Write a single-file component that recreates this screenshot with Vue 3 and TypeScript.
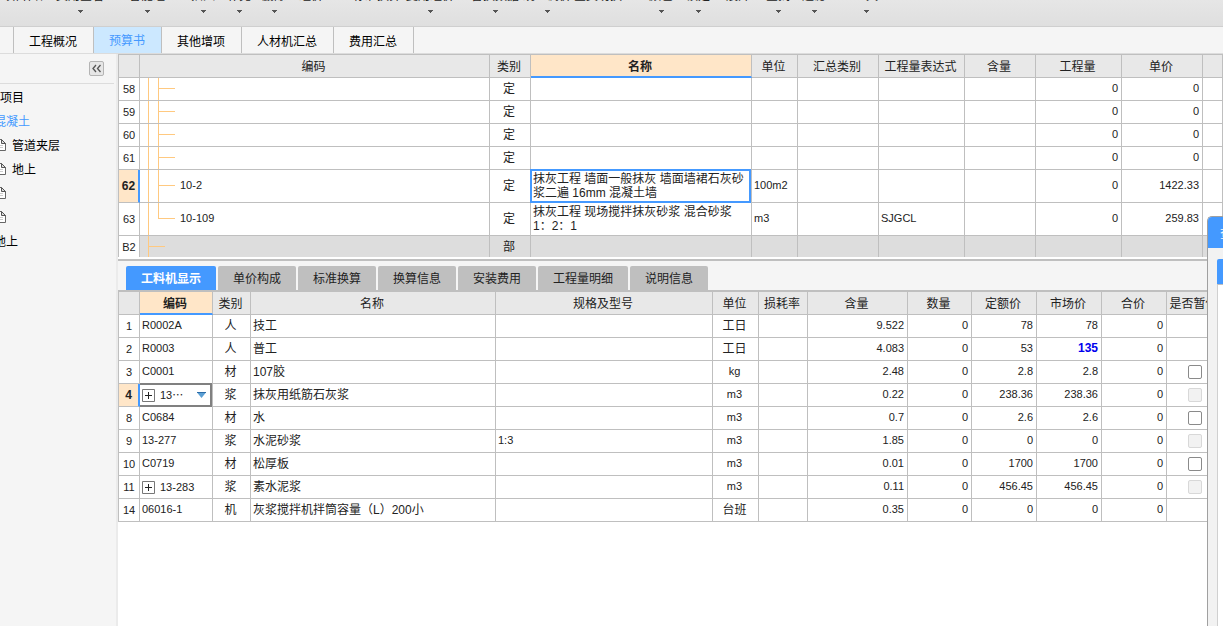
<script setup lang="ts">
import { ref } from 'vue'

interface ToolItem { label: string; width: number; menu: boolean; gap: number }
const tools: ToolItem[] = [
  { label: '项目自检', width: 54, menu: false, gap: 0 },
  { label: '费用查看', width: 52, menu: true, gap: 0 },
  { label: '智能组', width: 50, menu: true, gap: 16 },
  { label: '插入', width: 34, menu: true, gap: 14 },
  { label: '补充', width: 34, menu: true, gap: 2 },
  { label: '删除', width: 34, menu: true, gap: 1 },
  { label: '组价', width: 34, menu: false, gap: 3 },
  { label: '标准换算', width: 50, menu: false, gap: 24 },
  { label: '复用组价', width: 56, menu: true, gap: 0 },
  { label: '替换数据', width: 50, menu: true, gap: 12 },
  { label: '统一调价', width: 50, menu: true, gap: 2 },
  { label: '全费切换', width: 52, menu: false, gap: 0 },
  { label: '颜色', width: 34, menu: true, gap: 20 },
  { label: '锁定', width: 34, menu: true, gap: 3 },
  { label: '展开', width: 46, menu: false, gap: 0 },
  { label: '查找', width: 34, menu: true, gap: 0 },
  { label: '过滤', width: 34, menu: true, gap: 2 },
  { label: '工具', width: 34, menu: true, gap: 18 },
]

const pages = ['工程概况', '预算书', '其他增项', '人材机汇总', '费用汇总']
const page = ref('预算书')

interface TreeNode { label: string; kind: 'root' | 'active' | 'file' | 'leaf' }
const tree: TreeNode[] = [
  { label: '项目', kind: 'root' },
  { label: '混凝土', kind: 'active' },
  { label: '管道夹层', kind: 'file' },
  { label: '地上', kind: 'file' },
  { label: '', kind: 'file' },
  { label: '', kind: 'file' },
  { label: '地上', kind: 'leaf' },
]

interface Item {
  no: string; code: string; type: string; name: string; unit: string
  expr: string; qty: string; price: string; branch: 'through' | 'last' | 'section'
}
const blank = (no: string): Item => ({
  no, code: '', type: '定', name: '', unit: '', expr: '', qty: '0', price: '0', branch: 'through',
})
const items: Item[] = [
  blank('58'), blank('59'), blank('60'), blank('61'),
  { no: '62', code: '10-2', type: '定', name: '抹灰工程 墙面一般抹灰 墙面墙裙石灰砂浆二遍 16mm 混凝土墙', unit: '100m2', expr: '', qty: '0', price: '1422.33', branch: 'through' },
  { no: '63', code: '10-109', type: '定', name: '抹灰工程 现场搅拌抹灰砂浆 混合砂浆\n1：2：1', unit: 'm3', expr: 'SJGCL', qty: '0', price: '259.83', branch: 'last' },
  { no: 'B2', code: '', type: '部', name: '', unit: '', expr: '', qty: '', price: '', branch: 'section' },
]
const selected = '62'

const detailTabs = ['工料机显示', '单价构成', '标准换算', '换算信息', '安装费用', '工程量明细', '说明信息']
const detailTab = ref('工料机显示')

interface Resource {
  no: string; code: string; type: string; name: string; spec: string; unit: string
  amount: string; base: string; market: string; check: 'on' | 'off' | ''; group?: boolean; changed?: boolean
}
const resources: Resource[] = [
  { no: '1', code: 'R0002A', type: '人', name: '技工', spec: '', unit: '工日', amount: '9.522', base: '78', market: '78', check: '' },
  { no: '2', code: 'R0003', type: '人', name: '普工', spec: '', unit: '工日', amount: '4.083', base: '53', market: '135', check: '', changed: true },
  { no: '3', code: 'C0001', type: '材', name: '107胶', spec: '', unit: 'kg', amount: '2.48', base: '2.8', market: '2.8', check: 'on' },
  { no: '4', code: '13⋯', type: '浆', name: '抹灰用纸筋石灰浆', spec: '', unit: 'm3', amount: '0.22', base: '238.36', market: '238.36', check: 'off', group: true },
  { no: '8', code: 'C0684', type: '材', name: '水', spec: '', unit: 'm3', amount: '0.7', base: '2.6', market: '2.6', check: 'on' },
  { no: '9', code: '13-277', type: '浆', name: '水泥砂浆', spec: '1:3', unit: 'm3', amount: '1.85', base: '0', market: '0', check: 'off' },
  { no: '10', code: 'C0719', type: '材', name: '松厚板', spec: '', unit: 'm3', amount: '0.01', base: '1700', market: '1700', check: 'on' },
  { no: '11', code: '13-283', type: '浆', name: '素水泥浆', spec: '', unit: 'm3', amount: '0.11', base: '456.45', market: '456.45', check: 'off', group: true },
  { no: '14', code: '06016-1', type: '机', name: '灰浆搅拌机拌筒容量（L）200小', spec: '', unit: '台班', amount: '0.35', base: '0', market: '0', check: '' },
]
const editing = '4'
</script>

<template>
  <div class="app">
    <header class="toolbar">
      <button
        v-for="t in tools"
        :key="t.label"
        class="tool"
        type="button"
        :style="{ width: t.width + 'px', marginLeft: t.gap + 'px' }"
      >
        <span class="tool-label">{{ t.label }}</span>
        <svg class="arrow" :class="{ none: !t.menu }" viewBox="0 0 5 3" aria-hidden="true">
          <path d="M0 0h5v1H4v1H3v1H2V2H1V1H0z" fill="#555" />
        </svg>
      </button>
    </header>

    <nav class="pages">
      <span class="pages-edge"></span>
      <button
        v-for="p in pages"
        :key="p"
        type="button"
        class="page"
        :class="{ active: p === page }"
        @click="page = p"
      >{{ p }}</button>
    </nav>

    <div class="body">
      <aside class="sidebar">
        <div class="side-head">
          <button class="collapse" type="button" aria-label="收起">
            <svg viewBox="0 0 13 13" aria-hidden="true">
              <path d="M6 3L3 6.500l3 3.500M10.500 3l-3 3.500l3 3.500" fill="none" stroke="#555" stroke-width="1.3" />
            </svg>
          </button>
        </div>
        <ul class="tree">
          <li v-for="(n, i) in tree" :key="i" :class="n.kind">
            <svg v-if="n.kind === 'file'" class="file" viewBox="0 0 12 12" aria-hidden="true">
              <path d="M1.500 .5h6l4 4v7h-10z" fill="#fff" stroke="#666" />
              <path d="M7.500 .5v4h4z" fill="#ddd" stroke="#555" />
              <path d="M3 6.500h6M3 8.500h6" stroke="#ccc" />
            </svg>
            <span class="node">{{ n.label }}</span>
          </li>
        </ul>
      </aside>

      <main class="work">
        <section class="upper">
          <table class="grid">
            <colgroup>
              <col class="w21"><col class="w350"><col class="w41"><col class="w221"><col class="w46"><col class="w81">
              <col class="w86"><col class="w71"><col class="w86"><col class="w81"><col>
            </colgroup>
            <thead>
              <tr>
                <th></th><th>编码</th><th>类别</th><th class="current">名称</th><th>单位</th><th>汇总类别</th>
                <th>工程量表达式</th><th>含量</th><th>工程量</th><th>单价</th><th></th>
              </tr>
            </thead>
            <tbody>
              <tr
                v-for="r in items"
                :key="r.no"
                :class="{ tall: r.code !== '', band: r.branch === 'section' }"
              >
                <td class="no" :class="{ picked: r.no === selected }">{{ r.no }}</td>
                <td class="branch latin" :class="r.branch">{{ r.code }}</td>
                <td class="mid">{{ r.type }}</td>
                <td class="name" :class="{ focus: r.no === selected }">{{ r.name }}</td>
                <td class="latin">{{ r.unit }}</td>
                <td></td>
                <td class="latin">{{ r.expr }}</td>
                <td></td>
                <td class="num">{{ r.qty }}</td>
                <td class="num">{{ r.price }}</td>
                <td></td>
              </tr>
            </tbody>
          </table>
        </section>

        <section class="lower">
          <div class="tabs" role="tablist">
            <button
              v-for="t in detailTabs"
              :key="t"
              type="button"
              role="tab"
              class="tab"
              :aria-selected="t === detailTab"
              :class="{ active: t === detailTab }"
              @click="detailTab = t"
            >{{ t }}</button>
          </div>
          <table class="grid detail">
            <colgroup>
              <col class="w21"><col class="w73"><col class="w38"><col class="w245"><col class="w217"><col class="w46">
              <col class="w49"><col class="w100"><col class="w64"><col class="w65"><col class="w65"><col class="w65"><col>
            </colgroup>
            <thead>
              <tr>
                <th></th><th class="current">编码</th><th>类别</th><th>名称</th><th>规格及型号</th><th>单位</th>
                <th>损耗率</th><th>含量</th><th>数量</th><th>定额价</th><th>市场价</th><th>合价</th><th>是否暂估</th>
              </tr>
            </thead>
            <tbody>
              <tr v-for="r in resources" :key="r.no">
                <td class="no" :class="{ picked: r.no === editing }">{{ r.no }}</td>
                <td class="latin" :class="{ edit: r.no === editing, grouped: r.group }">
                  <div class="code">
                    <button v-if="r.group" class="plus" type="button" aria-label="展开">
                      <svg viewBox="0 0 13 13" aria-hidden="true">
                        <path d="M.5 .5h12v12H.5z" fill="#fff" stroke="#777" />
                        <path d="M3 6.500h7M6.500 3v7" stroke="#222" />
                      </svg>
                    </button>
                    <span>{{ r.code }}</span>
                    <button v-if="r.no === editing" class="drop" type="button" aria-label="选择编码">
                      <svg viewBox="0 0 9 6" aria-hidden="true">
                        <path d="M0 .5h9L4.500 6z" fill="#5a9fd4" />
                        <path d="M0 0h9v1H0z" fill="#2c6ca8" />
                      </svg>
                    </button>
                  </div>
                </td>
                <td class="mid">{{ r.type }}</td>
                <td>{{ r.name }}</td>
                <td class="latin">{{ r.spec }}</td>
                <td class="mid" :class="{ latin: r.unit < 'z' }">{{ r.unit }}</td>
                <td></td>
                <td class="num">{{ r.amount }}</td>
                <td class="num">0</td>
                <td class="num">{{ r.base }}</td>
                <td class="num" :class="{ changed: r.changed }">{{ r.market }}</td>
                <td class="num">0</td>
                <td class="check">
                  <input v-if="r.check" type="checkbox" :disabled="r.check === 'off'" :aria-label="'是否暂估 ' + r.name">
                </td>
              </tr>
            </tbody>
          </table>
        </section>
      </main>
    </div>

    <aside class="window">
      <div class="window-title">查询</div>
      <div class="window-body">
        <div class="window-tab"></div>
        <div class="window-page"></div>
      </div>
    </aside>
  </div>
</template>

<style>
body {
  margin: 0;
  overflow: hidden;
}
</style>

<style scoped>
.app {
  position: relative;
  display: flex;
  flex-direction: column;
  height: 100vh;
  overflow: hidden;
  background: #f5f5f5;
  color: #222;
  font: 12px/14px "Liberation Sans", "Noto Sans CJK SC", sans-serif;
}
.app *,
.app *::after {
  box-sizing: border-box;
}
button {
  margin: 0;
  padding: 0;
  border: 0;
  background: none;
  color: inherit;
  font: inherit;
  white-space: nowrap;
}
svg {
  display: block;
}

.toolbar {
  display: flex;
  flex: none;
  align-items: flex-end;
  height: 27px;
  padding-bottom: 13px;
  border-bottom: 1px solid #cfcfcf;
  background: linear-gradient(#e6e6e6, #dfdfdf);
  overflow: hidden;
}
.tool {
  display: flex;
  flex: none;
  flex-direction: column;
  align-items: center;
  gap: 7px;
}
.tool-label {
  line-height: 14px;
}
.arrow {
  width: 5px;
  height: 3px;
}
.arrow.none {
  visibility: hidden;
}

.pages {
  display: flex;
  flex: none;
  height: 27px;
  border-bottom: 1px solid #dcdcdc;
}
.pages-edge {
  width: 14px;
  border-right: 1px solid #bfbfbf;
}
.page {
  padding: 4px 16px 0 15px;
  border-right: 1px solid #bfbfbf;
  color: #000;
}
.page.active {
  padding-top: 2px;
  background: #cce8ff;
  color: #4499ff;
}

.body {
  display: flex;
  flex: 1;
  min-height: 0;
}
.sidebar {
  flex: none;
  width: 118px;
  border-right: 2px solid #ebebeb;
  overflow: hidden;
}
.side-head {
  display: flex;
  justify-content: flex-end;
  align-items: center;
  height: 30px;
  margin-right: 2px;
  padding-right: 10px;
  border-bottom: 1px solid #dcdcdc;
}
.collapse {
  width: 15px;
  height: 15px;
  border: 1px solid #b4b4b4;
  border-radius: 2px;
  background: #e6e6e6;
}
.tree {
  margin: 1px 0 0;
  padding: 0;
  list-style: none;
  color: #000;
}
.tree li {
  display: flex;
  align-items: center;
  gap: 6px;
  height: 24px;
  white-space: nowrap;
}
.tree .active,
.tree .file,
.tree .leaf {
  margin-left: -6px;
}
.tree .active {
  color: #4499ff;
}
.tree svg.file {
  flex: none;
  width: 12px;
  height: 12px;
  margin: 0;
}
.node {
  padding-top: 2px;
}

.work {
  display: flex;
  flex: 1;
  flex-direction: column;
  min-width: 0;
  background: #fff;
}
.upper {
  flex: none;
  padding-bottom: 2px;
}
.grid {
  width: 100%;
  border-top: 1px solid #bfbfbf;
  border-left: 1px solid #bfbfbf;
  border-collapse: separate;
  border-spacing: 0;
  table-layout: fixed;
}
.grid.detail {
  border-top-width: 2px;
}
.w21 { width: 21px; }
.w38 { width: 38px; }
.w41 { width: 41px; }
.w46 { width: 46px; }
.w49 { width: 49px; }
.w64 { width: 64px; }
.w65 { width: 65px; }
.w71 { width: 71px; }
.w73 { width: 73px; }
.w81 { width: 81px; }
.w86 { width: 86px; }
.w100 { width: 100px; }
.w217 { width: 217px; }
.w221 { width: 221px; }
.w245 { width: 245px; }
.w350 { width: 350px; }
th,
td {
  height: 23px;
  padding: 0 2px;
  border-right: 1px solid #bfbfbf;
  border-bottom: 1px solid #bfbfbf;
  text-align: left;
  white-space: nowrap;
  overflow: hidden;
}
th {
  padding: 2px 2px 0 0;
  background: #e8e8e8;
  font-weight: 400;
  text-align: center;
}
th.current {
  border-bottom: 2px solid #4499ff;
  background: #ffe6c8;
  font-weight: 700;
}
.tall td {
  height: 33px;
}
.band td {
  height: 21px;
  border-bottom: 0;
  background-color: #ddd;
}
.band td.no {
  background-color: #fff;
}
.latin,
.num,
.no {
  font-size: 11px;
}
.mid {
  padding: 0 2px 0 0;
  text-align: center;
}
.no {
  padding: 0;
  text-align: center;
}
.latin {
  padding-bottom: 2px;
}
.grouped {
  padding-bottom: 0;
}
.num {
  padding: 0 3px 2px 0;
  text-align: right;
}
.changed {
  color: #0000ee;
  font-size: 12px;
  font-weight: 700;
}
.check {
  padding: 0;
}
.no.picked {
  border-right: 2px solid #4499ff;
  background: #ffe6c8;
  font-size: 12px;
  font-weight: 700;
}
.name {
  white-space: pre-line;
}
.focus,
.edit {
  position: relative;
  overflow: visible;
}
.focus::after,
.edit::after {
  content: "";
  position: absolute;
  inset: -1px 0 -1px -1px;
  border: 2px solid #4499ff;
  pointer-events: none;
}
.edit::after {
  inset: -1px 0 -1px 0;
  border-color: #808080;
  border-left: 0;
}
.branch {
  padding-left: 40px;
  background-repeat: no-repeat;
  background-image:
    linear-gradient(#ffc980, #ffc980),
    linear-gradient(#ffc980, #ffc980),
    linear-gradient(#ffc980, #ffc980);
  background-position: 8px 0, 18px 0, 18px 10px;
  background-size: 1px 100%, 1px 100%, 17px 1px;
}
.tall .branch {
  background-position: 8px 0, 18px 0, 18px 15px;
}
.tall .branch.last {
  background-size: 1px 100%, 1px 15px, 17px 1px;
}
.branch.section {
  background-position: 8px 0, 8px 0, 8px 10px;
}
.code {
  display: flex;
  align-items: center;
  gap: 5px;
}
.plus,
.plus svg {
  width: 13px;
  height: 13px;
}
.drop {
  margin: 0 4px 0 auto;
}
.drop svg {
  width: 9px;
  height: 6px;
}
input[type="checkbox"] {
  display: block;
  width: 14px;
  height: 14px;
  margin: 0 auto;
  border: 1px solid #8a8a8a;
  border-radius: 2px;
  background: #fff;
  appearance: none;
}
input[type="checkbox"]:disabled {
  border-color: #d8d8d8;
  background: #f2f2f2;
}

.lower {
  border-top: 2px solid #bfbfbf;
}
.tabs {
  display: flex;
  gap: 2px;
  height: 29px;
  padding: 5px 0 0 8px;
  background: #f5f5f5;
}
.tab {
  padding: 2px 15px 0;
  border-radius: 2px 2px 0 0;
  background: #bfbfbf;
}
.tab.active {
  background: #4499ff;
  color: #fff;
  font-weight: 700;
}

.window {
  position: absolute;
  top: 216px;
  right: 0;
  bottom: 0;
  display: flex;
  flex-direction: column;
  width: 16px;
  border-top: 1px solid #a0a0a0;
  border-left: 1px solid #a0a0a0;
  border-radius: 5px 0 0 0;
  background: #f2f2f2;
  overflow: hidden;
}
.window-title {
  flex: none;
  height: 31px;
  padding-left: 12px;
  background: #4499ff;
  color: #fff;
  line-height: 34px;
  white-space: nowrap;
}
.window-body {
  display: flex;
  flex: 1;
  flex-direction: column;
  padding: 11px 0 0 9px;
}
.window-tab {
  height: 25px;
  border-radius: 2px 0 0 0;
  background: #4499ff;
}
.window-page {
  flex: 1;
  border-top: 1px solid #bfbfbf;
  border-left: 1px solid #d0d0d0;
  background: #fff;
}
</style>
